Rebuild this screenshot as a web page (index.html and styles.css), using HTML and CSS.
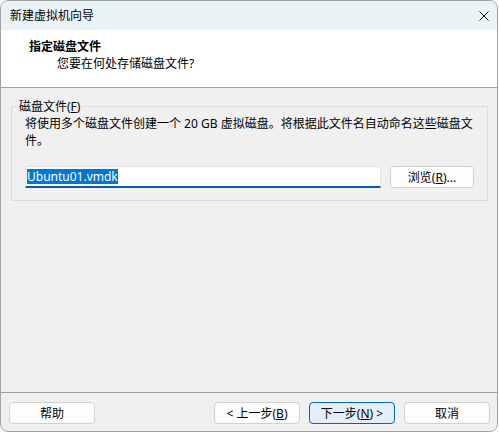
FILE: index.html
```html
<!DOCTYPE html>
<html lang="zh-CN">
<head>
    <meta charset="UTF-8">
    <title>新建虚拟机向导</title>
    <link rel="stylesheet" href="styles.css">
</head>
<body>

<div class="window">
    <div class="titlebar">
        <span class="title">新建虚拟机向导</span>
        <svg class="close" width="10" height="10" viewBox="0 0 10 10">
            <path d="M0.5 0.5 L9.5 9.5 M9.5 0.5 L0.5 9.5" stroke="#1a1a1a" stroke-width="1" fill="none"/>
        </svg>
    </div>

    <div class="header">
        <div class="header-title">指定磁盘文件</div>
        <div class="header-sub">您要在何处存储磁盘文件?</div>
    </div>

    <div class="content">
        <fieldset class="group">
            <legend>磁盘文件(<u>F</u>)</legend>
            <p class="desc">将使用多个磁盘文件创建一个 20 GB 虚拟磁盘。将根据此文件名自动命名这些磁盘文件。</p>
            <div class="file-row">
                <div class="file-input"><span class="selected">Ubuntu01.vmdk</span></div>
                <button class="btn browse">浏览(<u>R</u>)...</button>
            </div>
        </fieldset>
    </div>

    <div class="footer">
        <button class="btn">帮助</button>
        <div class="spacer"></div>
        <button class="btn">&lt; 上一步(<u>B</u>)</button>
        <button class="btn primary">下一步(<u>N</u>) &gt;</button>
        <button class="btn">取消</button>
    </div>
</div>

</body>
</html>
```

FILE: styles.css
```css
body {
    margin: 0;
    background-color: #ffffff;
    font-family: "Noto Sans", "Noto Sans CJK SC", sans-serif;
    font-size: 12px;
    color: #000;
}
.window {
    width: 498px;
    height: 432px;
    box-sizing: border-box;
    border: 1px solid #a3a3a3;
    border-radius: 8px;
    overflow: hidden;
    display: flex;
    flex-direction: column;
    background-color: #f0f0f0;
}
.titlebar {
    height: 29px;
    flex-shrink: 0;
    background-color: #e9f3f7;
    display: flex;
    align-items: center;
    justify-content: space-between;
    padding: 0 8px 0 9px;
}
.title {
    line-height: 17px;
}
.header {
    height: 58px;
    flex-shrink: 0;
    box-sizing: border-box;
    background-color: #fff;
    border-bottom: 1px solid #a0a0a0;
    padding: 8px 0 0 28px;
    line-height: 17px;
}
.header-title {
    font-weight: bold;
}
.header-sub {
    margin-left: 28px;
}
.content {
    flex: 1;
    padding: 10px 9px 0 10px;
}
.group {
    margin: 0;
    border: 1px solid #dcdcdc;
    padding: 0 13px 12px 13px;
}
.group legend {
    margin-left: -8px;
    padding: 0 2px;
    line-height: 17px;
}
.desc {
    margin: 0;
    line-height: 17px;
}
.file-row {
    display: flex;
    align-items: center;
    gap: 9px;
    margin-top: 17px;
}
.file-input {
    width: 356px;
    height: 22px;
    box-sizing: border-box;
    background-color: #fff;
    border: 1px solid #e3e3e3;
    border-bottom: 2px solid #005fb8;
    border-radius: 3px 3px 0 0;
    padding-left: 1px;
    display: flex;
    align-items: center;
}
.selected {
    background-color: #0078d7;
    color: #fff;
    line-height: 15px;
}
.btn {
    width: 86px;
    height: 22px;
    padding: 0;
    font-family: inherit;
    font-size: 12px;
    color: #000;
    background-color: #fdfdfd;
    border: 1px solid #d0d0d0;
    border-radius: 4px;
}
.browse {
    width: 84px;
}
.primary {
    background-color: #e3eefa;
    border-color: #0067c0;
}
.footer {
    flex-shrink: 0;
    display: flex;
    gap: 9px;
    border-top: 1px solid #a0a0a0;
    padding: 9px 7px 7px 8px;
}
.spacer {
    flex: 1;
}
```
